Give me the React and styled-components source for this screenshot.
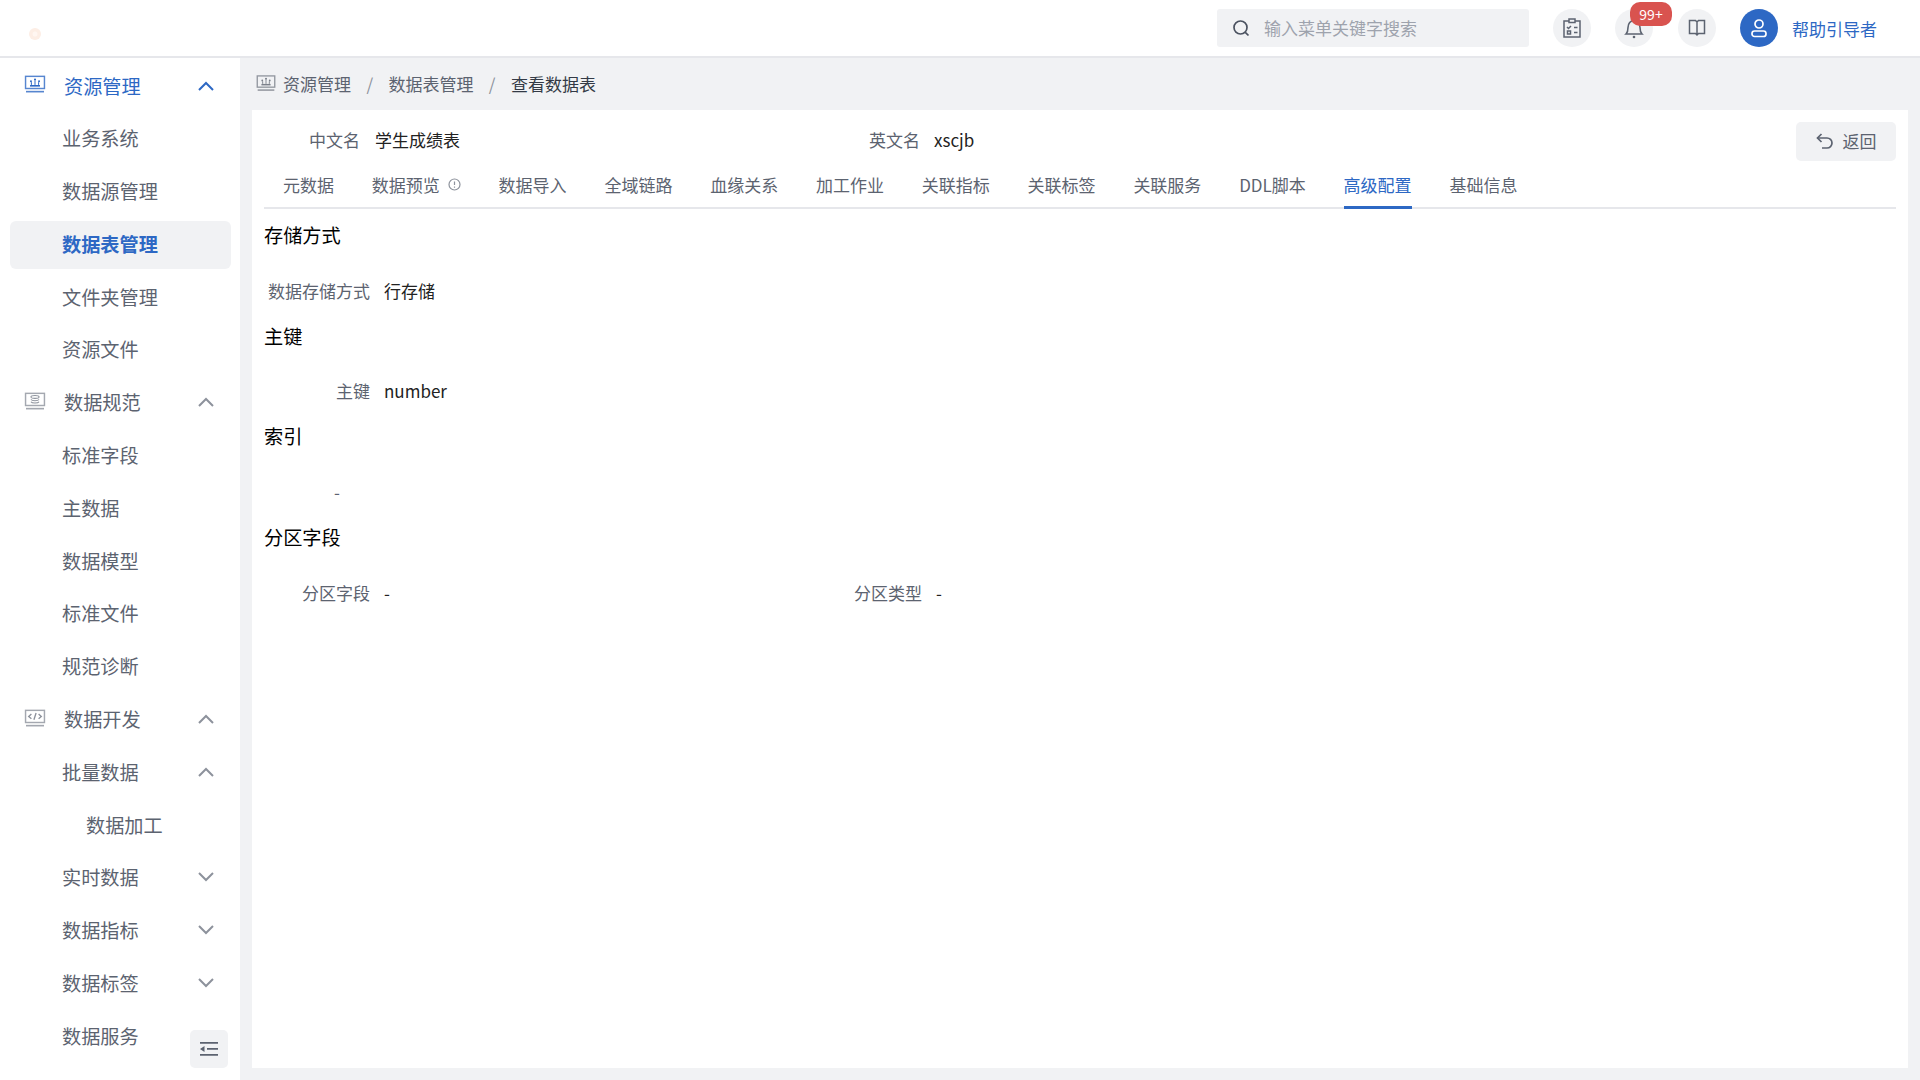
import styled, { createGlobalStyle } from "styled-components";

const Global = createGlobalStyle`
  html, body {
    margin: 0;
    padding: 0;
    background: #f1f2f4;
    font-family: "Noto Sans CJK SC", "Noto Sans", sans-serif;
  }
  * { box-sizing: border-box; }
`;

const Page = styled.div`
  width: 1920px;
  height: 1080px;
  display: flex;
  flex-direction: column;
  overflow: hidden;
`;
const Header = styled.header`
  height: 58px;
  flex: none;
  display: flex;
  align-items: center;
  background: #fff;
  border-bottom: 2px solid #e6e7eb;
  padding: 0 43px 0 29px;
`;
const Logo = styled.svg`
  width: 12px;
  height: 12px;
  margin-top: 11px;
`;
const HeaderRight = styled.div`
  margin-left: auto;
  display: flex;
  align-items: center;
`;
const Search = styled.div`
  width: 312px;
  height: 38px;
  display: flex;
  align-items: center;
  gap: 14px;
  padding-left: 15px;
  margin-right: 24px;
  background: #f1f2f4;
  border-radius: 3px;
  color: #4b5260;
`;
const SearchInput = styled.input`
  flex: 1;
  min-width: 0;
  border: none;
  background: none;
  outline: none;
  padding: 0 0 2px;
  font: inherit;
  font-size: 17px;
  &::placeholder { color: #9ea3ad; opacity: 1; }
`;
const RoundButton = styled.div`
  position: relative;
  width: 38px;
  height: 38px;
  margin-right: ${(props) => props.$gap}px;
  border-radius: 50%;
  flex: none;
  display: flex;
  align-items: center;
  justify-content: center;
  color: ${(props) => (props.$primary ? "#fff" : "#5c6370")};
  background: ${(props) => (props.$primary ? "#2d68c4" : "#f1f2f4")};
`;
const Badge = styled.span`
  position: absolute;
  top: -7px;
  left: 15px;
  width: 42px;
  height: 24px;
  border-radius: 10px;
  background: #d9534f;
  color: #fff;
  font-size: 14px;
  line-height: 24px;
  text-align: center;
`;
const UserName = styled.span`
  font-size: 17px;
  color: #2d68c4;
  white-space: nowrap;
`;

const Body = styled.div`
  flex: 1;
  min-height: 0;
  display: flex;
`;
const Sidebar = styled.nav`
  position: relative;
  width: 240px;
  flex: none;
  background: #fff;
  padding: 4.5px 9px 0 10px;
  overflow: hidden;
`;
const NavRow = styled.div`
  height: 48px;
  margin-bottom: 4.8px;
  display: flex;
  align-items: center;
  padding: 0 0 2px ${(props) => props.$indent}px;
  border-radius: 6px;
  font-size: 19.2px;
  font-weight: ${(props) => (props.$active ? 700 : 400)};
  color: ${(props) => (props.$active || props.$open ? "#2d68c4" : "#5c6370")};
  background: ${(props) => (props.$active ? "#f1f2f4" : "transparent")};
`;
const NavIcon = styled.svg`
  width: 22px;
  height: 18px;
  flex: none;
  margin: -3px 18px 0 -1px;
  color: ${(props) => (props.$open ? "#2d68c4" : "#8d929c")};
`;
const Chevron = styled.svg`
  width: 16px;
  height: 10px;
  margin-left: auto;
  margin-right: 17px;
  flex: none;
  color: ${(props) => (props.$open ? "#2d68c4" : "#8d929c")};
`;
const CollapseButton = styled.div`
  position: absolute;
  left: 190px;
  bottom: 12px;
  width: 38px;
  height: 38px;
  border-radius: 5px;
  background: #f1f2f4;
  display: flex;
  align-items: center;
  justify-content: center;
  padding-bottom: 1px;
  color: #5c6370;
`;

const Main = styled.main`
  flex: 1;
  min-width: 0;
  display: flex;
  flex-direction: column;
  padding: 0 12px 12px;
`;
const Breadcrumb = styled.div`
  height: 52px;
  flex: none;
  display: flex;
  align-items: center;
  padding: 0 0 2px 4px;
  font-size: 17px;
  color: #5c6370;
`;
const CrumbIcon = styled.svg`
  width: 20px;
  height: 18px;
  margin: -1px 7px 0 0;
  color: #7b808a;
`;
const CrumbSep = styled.span`
  margin: 0 15.4px;
  color: #8d929c;
`;
const CrumbLast = styled.span`
  color: #333a46;
`;
const Card = styled.section`
  flex: 1;
  min-height: 0;
  background: #fff;
  padding: 0 12px;
`;
const TopRow = styled.div`
  height: 60px;
  display: flex;
  align-items: center;
`;
const BackButton = styled.div`
  margin-left: auto;
  width: 100px;
  height: 39px;
  margin-top: 3px;
  padding-bottom: 2px;
  display: flex;
  align-items: center;
  justify-content: center;
  gap: 9px;
  border-radius: 5px;
  background: #f1f2f4;
  font-size: 17px;
  color: #5c6370;
`;
const Tabs = styled.div`
  height: 39px;
  display: flex;
  gap: 37.8px;
  padding-left: 19px;
  border-bottom: 2px solid #e6e7eb;
`;
const Tab = styled.div`
  height: 39px;
  display: flex;
  align-items: center;
  padding-bottom: 7px;
  font-size: 17px;
  white-space: nowrap;
  color: ${(props) => (props.$active ? "#2d68c4" : "#5c6370")};
  border-bottom: 3px solid ${(props) => (props.$active ? "#2d68c4" : "transparent")};
`;
const TabInfo = styled.svg`
  width: 13px;
  height: 13px;
  margin-left: 8px;
  color: #8d929c;
`;
const Content = styled.div`
  padding-top: 11px;
`;
const Section = styled.div`
  height: 100.7px;
`;
const SectionTitle = styled.h3`
  margin: 0 0 25px;
  height: 30px;
  line-height: 30px;
  font-size: 19.2px;
  font-weight: 400;
  color: #000;
`;
const Fields = styled.div`
  display: flex;
  height: 30px;
  align-items: center;
`;
const Field = styled.div`
  width: ${(props) => props.$width || 552}px;
  display: flex;
  align-items: center;
  gap: ${(props) => props.$gap || 14}px;
  font-size: 17px;
`;
const InfoField = styled(Field)`
  margin-top: -2px;
`;
const Label = styled.span`
  width: ${(props) => props.$width || 106}px;
  flex: none;
  text-align: right;
  color: #5c6370;
  white-space: nowrap;
`;
const Value = styled.span`
  color: #222;
  white-space: nowrap;
`;

const MonitorFrame = () => (
  <>
    <rect x="1.500" y="1.500" width="21" height="13.500" fill="none" stroke="currentColor" strokeWidth="1.600" opacity="0.8" />
    <path d="M2 18.500h20" stroke="currentColor" strokeWidth="1.800" opacity="0.8" />
  </>
);
const ResourceGlyph = () => (
  <>
    <MonitorFrame />
    <path d="M6.500 12h11" stroke="currentColor" strokeWidth="1.800" fill="none" />
    <path d="M12 6v5M8 8v3M16 8v3" stroke="currentColor" strokeWidth="1.100" fill="none" />
    <circle cx="12" cy="5" r="1.200" fill="currentColor" />
    <circle cx="7.500" cy="7" r="1.100" fill="currentColor" />
    <circle cx="16.500" cy="7" r="1.100" fill="currentColor" />
  </>
);
const StandardGlyph = () => (
  <>
    <MonitorFrame />
    <ellipse cx="12" cy="5.500" rx="4.500" ry="1.600" fill="none" stroke="currentColor" strokeWidth="1.200" />
    <path d="M7.500 8.200c1 2 8 2 9 0M7.500 10.800c1 2 8 2 9 0" fill="none" stroke="currentColor" strokeWidth="1.200" />
  </>
);
const CodeGlyph = () => (
  <>
    <MonitorFrame />
    <path d="M8 5.500L5 8.200l3 2.700M16 5.500l3 2.700-3 2.700M13.200 4.500l-2.400 7.500" fill="none" stroke="currentColor" strokeWidth="1.500" />
  </>
);

const nav = [
  { label: "资源管理", glyph: ResourceGlyph, open: true, chevron: "up" },
  { label: "业务系统" },
  { label: "数据源管理" },
  { label: "数据表管理", active: true },
  { label: "文件夹管理" },
  { label: "资源文件" },
  { label: "数据规范", glyph: StandardGlyph, chevron: "up" },
  { label: "标准字段" },
  { label: "主数据" },
  { label: "数据模型" },
  { label: "标准文件" },
  { label: "规范诊断" },
  { label: "数据开发", glyph: CodeGlyph, chevron: "up" },
  { label: "批量数据", chevron: "up" },
  { label: "数据加工", deep: true },
  { label: "实时数据", chevron: "down" },
  { label: "数据指标", chevron: "down" },
  { label: "数据标签", chevron: "down" },
  { label: "数据服务" },
];

const tabs = ["元数据", "数据预览", "数据导入", "全域链路", "血缘关系", "加工作业", "关联指标", "关联标签", "关联服务", "DDL脚本", "高级配置", "基础信息"];

const App = () => {
  return (
    <Page>
      <Global />
      <Header>
        <Logo viewBox="0 0 12 12">
          <circle cx="6" cy="6" r="6" fill="#fdeee5" />
          <circle cx="6" cy="6" r="2.500" fill="#fff6f1" />
        </Logo>
        <HeaderRight>
          <Search>
            <svg width="18" height="18" viewBox="0 0 18 18" fill="none" stroke="currentColor" strokeWidth="1.700">
              <circle cx="8.500" cy="8.500" r="6.500" />
              <path d="M13.300 13.300L16.500 16.500" />
            </svg>
            <SearchInput placeholder="输入菜单关键字搜索" />
          </Search>
          <RoundButton $gap={24}>
            <svg width="18" height="20" viewBox="0 0 18 20" fill="none" stroke="currentColor" strokeWidth="1.500">
              <rect x="1" y="3" width="16" height="16" />
              <rect x="6" y="1" width="6" height="3.500" fill="#f1f2f4" />
              <path d="M4 9l1.500 1.500L8 8M11 9.500h3.500M11 14.500h3.500" />
              <rect x="4.500" y="13" width="3" height="3" />
            </svg>
          </RoundButton>
          <RoundButton $gap={25}>
            <svg width="20" height="22" viewBox="0 0 20 22" fill="none" stroke="currentColor" strokeWidth="1.600">
              <path d="M2 17h16c-1.600-1.600-2-3-2-6.500C16 6.500 13.500 3.500 10 3.500S4 6.500 4 10.500C4 14 3.600 15.400 2 17z" />
              <path d="M10 1.500v2" />
              <circle cx="10" cy="20" r="1.300" fill="currentColor" stroke="none" />
            </svg>
            <Badge>99+</Badge>
          </RoundButton>
          <RoundButton $gap={24}>
            <svg width="18" height="18" viewBox="0 0 18 18" fill="none" stroke="currentColor" strokeWidth="1.500">
              <path d="M1.500 1.500h6L9 3l1.500-1.500h6v13h-6L9 16l-1.500-1.500h-6zM9 3v13" />
            </svg>
          </RoundButton>
          <RoundButton $primary $gap={14}>
            <svg width="20" height="20" viewBox="0 0 20 20" fill="none" stroke="currentColor" strokeWidth="1.700">
              <circle cx="10" cy="6" r="4" />
              <rect x="3" y="13" width="14" height="5.500" rx="2.500" />
            </svg>
          </RoundButton>
          <UserName>帮助引导者</UserName>
        </HeaderRight>
      </Header>
      <Body>
        <Sidebar>
          {nav.map((item) => {
            const Glyph = item.glyph;
            return (
              <NavRow
                key={item.label}
                $active={item.active}
                $open={item.open}
                $indent={Glyph ? 15 : item.deep ? 76 : 52}
              >
                {Glyph && (
                  <NavIcon $open={item.open} viewBox="0 0 24 20">
                    <Glyph />
                  </NavIcon>
                )}
                {item.label}
                {item.chevron && (
                  <Chevron $open={item.open} viewBox="0 0 16 10" fill="none" stroke="currentColor" strokeWidth="2">
                    <path d={item.chevron === "up" ? "M1 9l7-7 7 7" : "M1 1l7 7 7-7"} />
                  </Chevron>
                )}
              </NavRow>
            );
          })}
          <CollapseButton>
            <svg width="18" height="14" viewBox="0 0 18 14" fill="currentColor">
              <path d="M0 0h18v1.800H0zM7 6h11v1.800H7zM0 12h18v1.800H0zM0 7l4.500-3v6z" />
            </svg>
          </CollapseButton>
        </Sidebar>
        <Main>
          <Breadcrumb>
            <CrumbIcon viewBox="0 0 24 20">
              <ResourceGlyph />
            </CrumbIcon>
            资源管理
            <CrumbSep>/</CrumbSep>
            数据表管理
            <CrumbSep>/</CrumbSep>
            <CrumbLast>查看数据表</CrumbLast>
          </Breadcrumb>
          <Card>
            <TopRow>
              <InfoField $width={561} $gap={15}>
                <Label $width={96}>中文名</Label>
                <Value>学生成绩表</Value>
              </InfoField>
              <InfoField $gap={14}>
                <Label $width={95}>英文名</Label>
                <Value>xscjb</Value>
              </InfoField>
              <BackButton>
                <svg width="18" height="16" viewBox="0 0 18 16" fill="none" stroke="currentColor" strokeWidth="1.700">
                  <path d="M5.500 1L1.500 5l4 4" />
                  <path d="M1.500 5h9.500a5 5 0 010 10H6" />
                </svg>
                返回
              </BackButton>
            </TopRow>
            <Tabs>
              {tabs.map((tab) => (
                <Tab key={tab} $active={tab === "高级配置"}>
                  {tab}
                  {tab === "数据预览" && (
                    <TabInfo viewBox="0 0 13 13" fill="none" stroke="currentColor" strokeWidth="1.200">
                      <circle cx="6.500" cy="6.500" r="5.500" />
                      <path d="M6.500 3.500v3.500M6.500 8.500v1.200" />
                    </TabInfo>
                  )}
                </Tab>
              ))}
            </Tabs>
            <Content>
              <Section>
                <SectionTitle>存储方式</SectionTitle>
                <Fields>
                  <Field>
                    <Label>数据存储方式</Label>
                    <Value>行存储</Value>
                  </Field>
                </Fields>
              </Section>
              <Section>
                <SectionTitle>主键</SectionTitle>
                <Fields>
                  <Field>
                    <Label>主键</Label>
                    <Value>number</Value>
                  </Field>
                </Fields>
              </Section>
              <Section>
                <SectionTitle>索引</SectionTitle>
                <Fields>
                  <Field>
                    <Label $width={76}>-</Label>
                  </Field>
                </Fields>
              </Section>
              <Section>
                <SectionTitle>分区字段</SectionTitle>
                <Fields>
                  <Field>
                    <Label>分区字段</Label>
                    <Value>-</Value>
                  </Field>
                  <Field>
                    <Label>分区类型</Label>
                    <Value>-</Value>
                  </Field>
                </Fields>
              </Section>
            </Content>
          </Card>
        </Main>
      </Body>
    </Page>
  );
};

export default App;
